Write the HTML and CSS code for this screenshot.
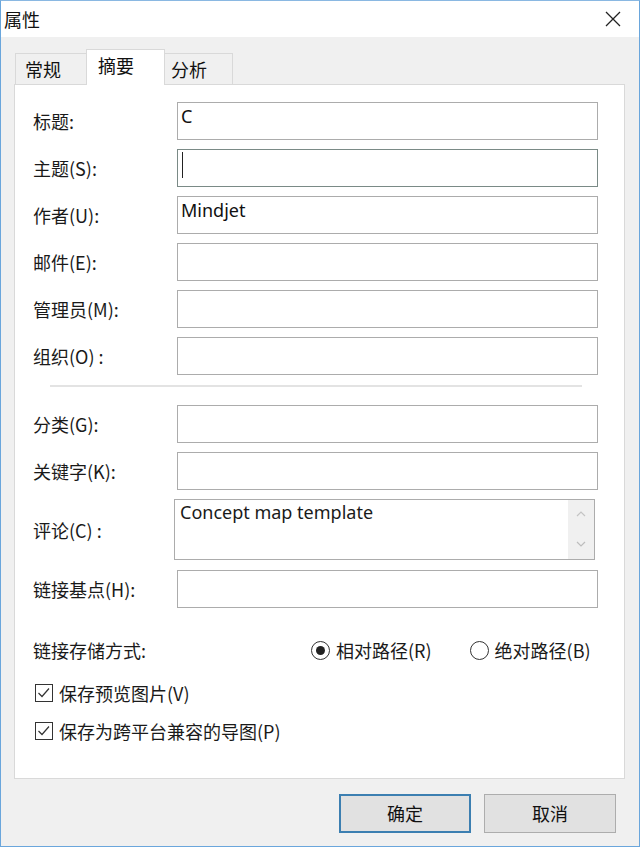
FILE: index.html
```html
<!DOCTYPE html>
<html lang="zh-CN">
<head>
	<meta charset="UTF-8">
	<title>属性</title>
	<link rel="stylesheet" href="styles.css">
</head>
<body>
	<div class="window">
		<div class="titlebar">
			<span class="title">属性</span>
			<svg class="close" width="16" height="16" viewBox="0 0 16 16">
				<path d="M1 1 L15 15 M15 1 L1 15" stroke="#222" stroke-width="1.3" fill="none"/>
			</svg>
		</div>
		<div class="client">
			<ul class="tabs">
				<li class="tab t1">常规</li>
				<li class="tab t2 active">摘要</li>
				<li class="tab t3">分析</li>
			</ul>
			<div class="panel">
				<div class="row"><label>标题:</label><div class="field">C</div></div>
				<div class="row"><label>主题(S):</label><div class="field focus"><span class="caret"></span></div></div>
				<div class="row"><label>作者(U):</label><div class="field">Mindjet</div></div>
				<div class="row"><label>邮件(E):</label><div class="field"></div></div>
				<div class="row"><label>管理员(M):</label><div class="field"></div></div>
				<div class="row"><label>组织(O)&nbsp;:</label><div class="field"></div></div>

				<div class="sep"></div>

				<div class="row first"><label>分类(G):</label><div class="field"></div></div>
				<div class="row"><label>关键字(K):</label><div class="field"></div></div>
				<div class="row tall">
					<label>评论(C)&nbsp;:</label>
					<div class="memo">
						<div class="memo-text">Concept map template</div>
						<div class="scroll">
							<svg width="10" height="6" viewBox="0 0 10 6"><path d="M1 5 L5 1 L9 5" stroke="#c4c4c4" stroke-width="1.2" fill="none"/></svg>
							<svg width="10" height="6" viewBox="0 0 10 6"><path d="M1 1 L5 5 L9 1" stroke="#bdbdbd" stroke-width="1.2" fill="none"/></svg>
						</div>
					</div>
				</div>
				<div class="row"><label>链接基点(H):</label><div class="field"></div></div>

				<div class="linkrow">
					<span class="linklabel">链接存储方式:</span>
					<span class="radio on"><i></i>相对路径(R)</span>
					<span class="radio"><i></i>绝对路径(B)</span>
				</div>
				<div class="check c1">
					<svg width="18" height="18" viewBox="0 0 18 18"><rect x="0.5" y="0.5" width="17" height="17" fill="#fff" stroke="#333"/><path d="M3.5 9 L7 12.5 L14 4.5" stroke="#333" stroke-width="1.2" fill="none"/></svg>
					<span>保存预览图片(V)</span>
				</div>
				<div class="check c2">
					<svg width="18" height="18" viewBox="0 0 18 18"><rect x="0.5" y="0.5" width="17" height="17" fill="#fff" stroke="#333"/><path d="M3.5 9 L7 12.5 L14 4.5" stroke="#333" stroke-width="1.2" fill="none"/></svg>
					<span>保存为跨平台兼容的导图(P)</span>
				</div>
			</div>
			<div class="buttons">
				<div class="btn default">确定</div>
				<div class="btn">取消</div>
			</div>
		</div>
	</div>
</body>
</html>
```

FILE: styles.css
```css
html, body {
	margin: 0;
	padding: 0;
}

body {
	font-family: "Noto Sans CJK SC", "Noto Sans", sans-serif;
	font-size: 18px;
	color: #1a1a1a;
	background-color: #fff;
}

ul, li {
	margin: 0;
	padding: 0;
	list-style: none;
}

.window {
	width: 640px;
	height: 847px;
	box-sizing: border-box;
	border: 1px solid #6aa6dc;
	border-top-color: #8ab8e2;
	display: flex;
	flex-direction: column;
}

.titlebar {
	height: 36px;
	background-color: #fff;
	display: flex;
	align-items: center;
	justify-content: space-between;
	padding-left: 3px;
	padding-right: 18px;
}

.title {
	font-size: 18px;
	color: #111;
}

.close {
	margin-top: -1px;
}

.client {
	flex: 1;
	background-color: #f0f0f0;
	padding: 12px 14px 0 13px;
	display: flex;
	flex-direction: column;
}

.tabs {
	display: flex;
	align-items: flex-end;
	height: 35px;
	margin-left: 1px;
	position: relative;
	z-index: 1;
}

.tab {
	height: 31px;
	box-sizing: border-box;
	border: 1px solid #d9d9d9;
	border-bottom: none;
	background-color: #f0f0f0;
	font-size: 18px;
	line-height: 31px;
	padding-left: 9px;
	color: #111;
}

.t1 {
	width: 71px;
	border-right: none;
}

.t2 {
	width: 79px;
}

.t3 {
	width: 68px;
	border-left: none;
	padding-left: 6px;
}

.tab.active {
	height: 36px;
	background-color: #fff;
	line-height: 31px;
	padding-left: 11px;
	margin-bottom: -1px;
	border-left: 1px solid #d9d9d9;
	border-right: 1px solid #d9d9d9;
}

.panel {
	height: 695px;
	box-sizing: border-box;
	background-color: #fff;
	border: 1px solid #d9d9d9;
	padding: 17px 26px 0 18px;
	display: flex;
	flex-direction: column;
}

.row {
	display: flex;
	align-items: center;
	height: 38px;
	margin-bottom: 9px;
}

.row label {
	width: 144px;
	flex-shrink: 0;
	white-space: nowrap;
}

.field {
	width: 421px;
	height: 38px;
	box-sizing: border-box;
	border: 1px solid #acacac;
	align-self: flex-start;
	padding: 1px 3px 0 3px;
	font-family: "Noto Sans", "Open Sans", sans-serif;
	font-size: 18px;
	line-height: 24px;
	color: #111;
}

.field.focus {
	border-color: #7a8a86;
	padding-top: 1px;
}

.caret {
	display: inline-block;
	width: 1px;
	height: 26px;
	margin-left: 1px;
	margin-top: 1px;
	background-color: #222;
	vertical-align: top;
}

.sep {
	height: 2px;
	background-color: #e3e3e3;
	margin: 1px 16px 18px 17px;
}

.row.tall {
	height: 61px;
	margin-bottom: 10px;
}

.memo {
	width: 421px;
	height: 61px;
	box-sizing: border-box;
	border: 1px solid #acacac;
	margin-left: -3px;
	display: flex;
}

.memo-text {
	flex: 1;
	padding: 0 5px 0 5px;
	font-family: "Noto Sans", "Open Sans", sans-serif;
	font-size: 18px;
	line-height: 24px;
}

.scroll {
	width: 26px;
	background-color: #f0f0f0;
	display: flex;
	flex-direction: column;
	justify-content: space-between;
	align-items: center;
	padding: 11px 0 12px 0;
}

.linkrow {
	display: flex;
	align-items: center;
	height: 24px;
	margin-top: 21px;
	white-space: nowrap;
}

.linklabel {
	width: 278px;
	flex-shrink: 0;
}

.radio {
	display: flex;
	align-items: center;
	margin-right: 38px;
	flex-shrink: 0;
}

.radio i {
	width: 17px;
	height: 17px;
	border: 1px solid #333;
	border-radius: 50%;
	margin-right: 6px;
	position: relative;
	background-color: #fff;
}

.radio.on i:after {
	content: "";
	position: absolute;
	left: 4px;
	top: 4px;
	width: 9px;
	height: 9px;
	border-radius: 50%;
	background-color: #222;
}

.check {
	display: flex;
	align-items: center;
	height: 24px;
	margin-left: 2px;
	white-space: nowrap;
}

.check svg {
	margin-right: 6px;
}

.c1 {
	margin-top: 19px;
}

.c2 {
	margin-top: 14px;
}

.buttons {
	display: flex;
	justify-content: flex-end;
	gap: 13px;
	margin-top: 15px;
	padding-right: 9px;
}

.btn {
	width: 132px;
	height: 39px;
	box-sizing: border-box;
	border: 1px solid #adadad;
	background-color: #e1e1e1;
	font-size: 18px;
	line-height: 37px;
	text-align: center;
	color: #111;
}

.btn.default {
	border: 2px solid #3c7fb1;
	line-height: 35px;
}
```
